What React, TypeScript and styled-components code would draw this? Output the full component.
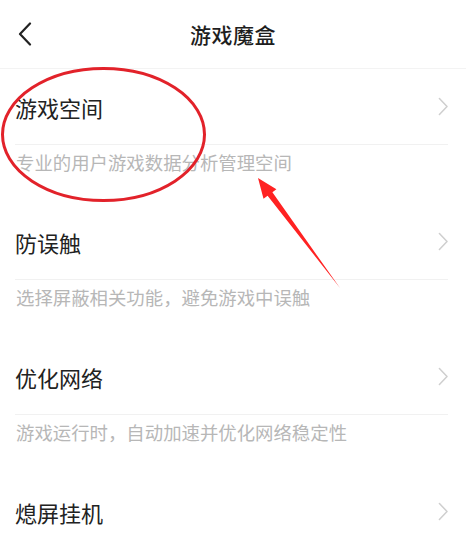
import React from 'react';
import styled, { createGlobalStyle } from 'styled-components';

const GlobalStyle = createGlobalStyle`
  html, body {
    margin: 0;
    padding: 0;
    background: #ffffff;
  }
  body {
    font-family: "Noto Sans CJK SC", "Noto Sans", sans-serif;
  }
`;

const Page = styled.div`
  position: relative;
  width: 466px;
  height: 544px;
  overflow: hidden;
  background: #ffffff;
`;

const Header = styled.div`
  display: grid;
  grid-template-columns: 60px 1fr 60px;
  align-items: center;
  height: 68px;
  border-bottom: 1px solid #f3f3f3;
`;

const BackButton = styled.div`
  display: flex;
  align-items: center;
  padding-left: 18px;
  height: 100%;
`;

const Title = styled.h1`
  margin: 0;
  text-align: center;
  font-size: 21px;
  font-weight: 500;
  color: #1e1e1e;
  letter-spacing: 0.5px;
`;

const Item = styled.div`
  display: flex;
  flex-direction: column;
`;

const ItemRow = styled.div`
  display: flex;
  align-items: center;
  justify-content: space-between;
  height: 75px;
  margin: 0 18px 0 15px;
  border-bottom: 1px solid #f1f1f1;
`;

const ItemTitle = styled.span`
  font-size: 22px;
  font-weight: 400;
  color: #222222;
`;

const ItemDesc = styled.div`
  height: 51px;
  padding: 8px 0 0 16px;
  font-size: 18.4px;
  line-height: 18px;
  color: #b7b7b7;
`;

const Overlay = styled.svg`
  position: absolute;
  left: 0;
  top: 0;
  pointer-events: none;
`;

const items = [
  { title: '游戏空间', desc: '专业的用户游戏数据分析管理空间' },
  { title: '防误触', desc: '选择屏蔽相关功能，避免游戏中误触' },
  { title: '优化网络', desc: '游戏运行时，自动加速并优化网络稳定性' },
  { title: '熄屏挂机', desc: '' },
];

const Chevron = ({ color, size, width }: { color: string; size: number; width: number }) => (
  <svg width={size * 0.55} height={size} viewBox="0 0 11 20" fill="none">
    <path d="M1.5 1.5 L9.5 10 L1.5 18.5" stroke={color} strokeWidth={width} strokeLinecap="round" strokeLinejoin="round" />
  </svg>
);

const BackIcon = () => (
  <svg width="14" height="24" viewBox="0 0 14 24" fill="none">
    <path d="M12 1.5 L2 12 L12 22.5" stroke="#222" strokeWidth="2.2" strokeLinecap="round" strokeLinejoin="round" />
  </svg>
);

export default function App() {
  return (
    <>
      <GlobalStyle />
      <Page>
        <Header>
          <BackButton>
            <BackIcon />
          </BackButton>
          <Title>游戏魔盒</Title>
          <div />
        </Header>

        {items.map((it) => (
          <Item key={it.title}>
            <ItemRow>
              <ItemTitle>{it.title}</ItemTitle>
              <Chevron color="#cfcfcf" size={19} width={1.6} />
            </ItemRow>
            <ItemDesc>{it.desc}</ItemDesc>
          </Item>
        ))}

        {/* 标注：红圈和箭头 */}
        <Overlay width="466" height="544" viewBox="0 0 466 544">
          <ellipse cx="103.5" cy="134.5" rx="101" ry="66" fill="none" stroke="#e2222a" strokeWidth="3" />
          <polygon
            points="258,178 276.4,189.3 272.4,192.3 340,288 267.6,195.8 263.5,198.8"
            fill="#ff2222"
          />
        </Overlay>
      </Page>
    </>
  );
}
